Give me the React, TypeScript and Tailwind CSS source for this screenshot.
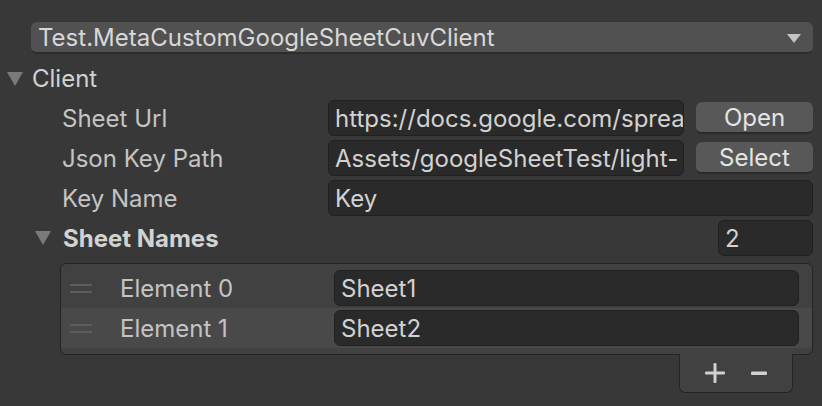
import React from 'react';

const font = { fontFamily: 'Inter, "Noto Sans", sans-serif' };

const Fold = ({ className }: { className?: string }) => (
  <svg width="16" height="14" viewBox="0 0 16 14" className={className}>
    <polygon points="0,0 16,0 8,14" fill="#7a7a7a" />
  </svg>
);

const Field = ({ value, className }: { value: string; className?: string }) => (
  <div
    className={`h-[36px] flex items-center rounded-[6px] bg-[#2a2a2a] border border-[#212121] pl-[6px] pr-[3px] pt-[2px] overflow-hidden whitespace-nowrap text-[#d2d2d2] ${className ?? ''}`}
  >
    {value}
  </div>
);

const Button = ({ label }: { label: string }) => (
  <div className="w-[117px] h-[32px] ml-[12px] flex items-center justify-center rounded-[6px] bg-[#585858] border-b-2 border-[#2a2a2a] pt-[2px] text-[#e4e4e4]">
    {label}
  </div>
);

export default function App() {
  return (
    <div
      className="w-[822px] h-[406px] bg-[#383838] text-[24px] leading-none text-[#c4c4c4] pt-[18px] pr-[9px] overflow-hidden"
      style={font}
    >
      {/* type dropdown */}
      <div className="h-[40px] flex items-center pl-[31px]">
        <div className="flex-1 h-[32px] flex items-center justify-between rounded-[6px] bg-[#515151] border-b-2 border-[#2c2c2c] pl-[7px] pr-[12px] pt-[2px] text-[#d8d8d8]">
          <span>Test.MetaCustomGoogleSheetCuvClient</span>
          <svg width="14" height="9" viewBox="0 0 14 9">
            <polygon points="0,0 14,0 7,9" fill="#c4c4c4" />
          </svg>
        </div>
      </div>

      {/* Client foldout */}
      <div className="h-[40px] flex items-center pl-[7px] pt-[2px]">
        <Fold />
        <span className="ml-[9px] text-[#d2d2d2]">Client</span>
      </div>

      <div className="h-[40px] flex items-center pl-[62px]">
        <span className="w-[266px] pt-[2px]">Sheet Url</span>
        <Field value="https://docs.google.com/spreadsheets/d/" className="w-[356px]" />
        <Button label="Open" />
      </div>

      <div className="h-[40px] flex items-center pl-[62px]">
        <span className="w-[266px] pt-[2px]">Json Key Path</span>
        <Field value="Assets/googleSheetTest/light-" className="w-[356px]" />
        <Button label="Select" />
      </div>

      <div className="h-[40px] flex items-center pl-[62px]">
        <span className="w-[266px] pt-[2px]">Key Name</span>
        <Field value="Key" className="flex-1" />
      </div>

      <div className="h-[40px] flex items-center pl-[35px]">
        <Fold />
        <span className="ml-[12px] flex-1 pt-[2px] font-bold text-[#d2d2d2]">Sheet Names</span>
        <Field value="2" className="w-[95px]" />
      </div>

      {/* reorderable list */}
      <div className="ml-[60px] mt-[5px] rounded-[6px] bg-[#414141] border border-[#242424] pt-[4px] pb-[6px]">
        {['Sheet1', 'Sheet2'].map((v, i) => (
          <div
            key={v}
            className={`h-[40px] flex items-center pl-[9px] pr-[13px] ${i === 1 ? 'bg-[#494949]' : ''}`}
          >
            <div className="w-[22px] flex flex-col gap-[5px]">
              <div className="h-[2px] bg-[#5c5c5c]" />
              <div className="h-[2px] bg-[#5c5c5c]" />
            </div>
            <span className="ml-[28px] w-[214px] pt-[2px]">Element {i}</span>
            <Field value={v} className="flex-1" />
          </div>
        ))}
      </div>

      <div className="flex justify-end pr-[20px]">
        <div className="w-[114px] h-[39px] -mt-[1px] flex items-center justify-around px-[12px] rounded-b-[6px] bg-[#414141] border border-t-0 border-[#242424] text-[#d8d8d8]">
          <svg width="20" height="20" viewBox="0 0 20 20">
            <rect x="8.5" y="0" width="3" height="20" rx="1" fill="#d0d0d0" />
            <rect x="0" y="8.5" width="20" height="3" rx="1" fill="#d0d0d0" />
          </svg>
          <svg width="16" height="20" viewBox="0 0 16 20">
            <rect x="0" y="8.5" width="16" height="3.5" rx="1" fill="#d0d0d0" />
          </svg>
        </div>
      </div>
    </div>
  );
}
